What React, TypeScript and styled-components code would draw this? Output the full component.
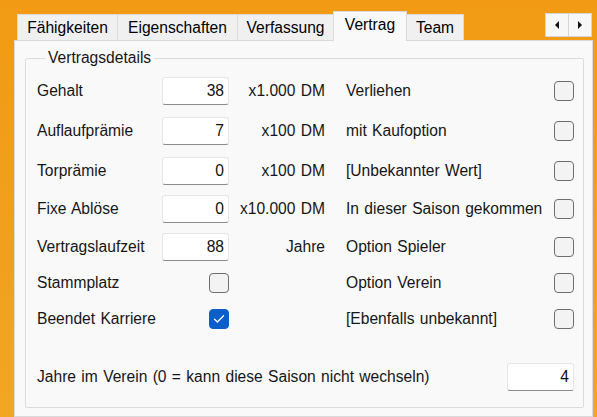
import React from 'react';
import styled, {createGlobalStyle} from "styled-components";

const GlobalStyle = createGlobalStyle`
    html, body {
        margin:0;
        padding:0;
        background:#f09c17;
    }
    body {
        font-family: "Liberation Sans", Arial, sans-serif;
        font-size:15.6px;
        word-spacing:1px;
        color:#161616;
    }
`;

const Window = styled.div`
    width:597px;
    height:417px;
    overflow:hidden;
    box-sizing:border-box;
    padding:11px 4px 0 14px;
    background: linear-gradient(180deg, #f29a13 0%, #f0a01e 60%, #f3a524 100%);
    display:flex;
    flex-direction:column;
`;

const TabStrip = styled.div`
    display:flex;
    align-items:flex-end;
    height:29px;
    padding-left:3px;
`;

const Tab = styled.div<{ $width: number; $active?: boolean }>`
    box-sizing:border-box;
    width:${({$width}) => $width}px;
    height:${({$active}) => $active ? 30 : 26}px;
    margin-bottom:${({$active}) => $active ? -1 : 0}px;
    margin-left:-1px;
    position:relative;
    z-index:${({$active}) => $active ? 1 : 0};
    display:flex;
    align-items:center;
    justify-content:center;
    padding-bottom:${({$active}) => $active ? 3 : 0}px;
    border:1px solid #dadada;
    border-bottom:none;
    background:${({$active}) => $active ? '#f9f9f9' : '#f0f0f0'};
    color:#000;
    white-space:nowrap;
    &:first-child { margin-left:0; }
`;

const ScrollButtons = styled.div`
    display:flex;
    margin-left:auto;
    margin-right:1px;
    align-self:flex-start;
    margin-top:2px;
`;

const ScrollButton = styled.div`
    box-sizing:border-box;
    width:24px;
    height:24px;
    border:1px solid #d6d6d6;
    background:#f7f7f7;
    display:flex;
    align-items:center;
    justify-content:center;
    & + & { margin-left:-1px; }
`;

const Panel = styled.div`
    flex:1;
    box-sizing:border-box;
    border:1px solid #dadada;
    background:#f9f9f9;
    padding:8px 8px 0 10px;
`;

const GroupBox = styled.fieldset`
    margin:0;
    box-sizing:border-box;
    width:559px;
    border:1px solid #dcdcdc;
    border-radius:2px;
    padding:4px 9px 13px 11px;
`;

const Legend = styled.legend`
    padding:0 3px;
    margin-left:8px;
    line-height:18px;
    color:#161616;
`;

const FormGrid = styled.div`
    display:grid;
    grid-template-columns:125px 67px 96px 21px 208px 20px;
    grid-template-rows:40px 40px 39px 38px 37px 36px 35px;
    align-items:center;
`;

const Label = styled.div`
    white-space:nowrap;
`;

const Unit = styled.div`
    text-align:right;
    white-space:nowrap;
`;

const TextBox = styled.div<{ $width?: number }>`
    box-sizing:border-box;
    width:${({$width}) => $width ?? 67}px;
    height:28px;
    background:#fff;
    border:1px solid #e6e6e6;
    border-bottom:1px solid #8d8d8d;
    border-radius:3px;
    display:flex;
    align-items:center;
    justify-content:flex-end;
    padding-right:4px;
    color:#111;
`;

const CheckBox = styled.div<{ $checked?: boolean }>`
    box-sizing:border-box;
    width:20px;
    height:20px;
    border-radius:4px;
    border:1px solid ${({$checked}) => $checked ? '#0c5fcb' : '#6e6e6e'};
    background:${({$checked}) => $checked ? '#0c5fcb' : '#f3f3f3'};
    display:flex;
    align-items:center;
    justify-content:center;
    justify-self:end;
`;

const FooterRow = styled.div`
    display:flex;
    align-items:center;
    justify-content:space-between;
    height:35px;
    margin-top:23px;
`;

type Field = {
    label: string;
    value?: string;
    unit?: string;
    checked?: boolean;
    right: string;
};

const fields: Field[] = [
    {label: "Gehalt", value: "38", unit: "x1.000 DM", right: "Verliehen"},
    {label: "Auflaufprämie", value: "7", unit: "x100 DM", right: "mit Kaufoption"},
    {label: "Torprämie", value: "0", unit: "x100 DM", right: "[Unbekannter Wert]"},
    {label: "Fixe Ablöse", value: "0", unit: "x10.000 DM", right: "In dieser Saison gekommen"},
    {label: "Vertragslaufzeit", value: "88", unit: "Jahre", right: "Option Spieler"},
    {label: "Stammplatz", checked: false, right: "Option Verein"},
    {label: "Beendet Karriere", checked: true, right: "[Ebenfalls unbekannt]"},
];

const tabs = [
    {text: "Fähigkeiten", width: 101},
    {text: "Eigenschaften", width: 121},
    {text: "Verfassung", width: 97},
    {text: "Vertrag", width: 74, active: true},
    {text: "Team", width: 58},
];

const Check = () => (
    <svg width="12" height="10" viewBox="0 0 12 10">
        <path d="M1.5 5.2 L4.4 8 L10.5 1.8" fill="none" stroke="#fff" strokeWidth="1.3"
              strokeLinecap="round" strokeLinejoin="round"/>
    </svg>
);

const Arrow = ({dir}: { dir: "left" | "right" }) => (
    <svg width="6" height="8" viewBox="0 0 6 8">
        <path d={dir === "left" ? "M5 0 L5 8 L1 4 Z" : "M1 0 L1 8 L5 4 Z"} fill="#111"/>
    </svg>
);

const App = () => {
    return (
        <>
            <GlobalStyle/>
            <Window>
                <TabStrip>
                    {tabs.map(t => (
                        <Tab key={t.text} $width={t.width} $active={t.active}>{t.text}</Tab>
                    ))}
                    <ScrollButtons>
                        <ScrollButton><Arrow dir="left"/></ScrollButton>
                        <ScrollButton><Arrow dir="right"/></ScrollButton>
                    </ScrollButtons>
                </TabStrip>
                <Panel>
                    <GroupBox>
                        <Legend>Vertragsdetails</Legend>
                        <FormGrid>
                            {fields.map(f => (
                                <React.Fragment key={f.label}>
                                    <Label>{f.label}</Label>
                                    {f.value !== undefined
                                        ? <TextBox>{f.value}</TextBox>
                                        : <CheckBox $checked={f.checked}>{f.checked && <Check/>}</CheckBox>}
                                    <Unit>{f.unit}</Unit>
                                    <span/>
                                    <Label>{f.right}</Label>
                                    <CheckBox/>
                                </React.Fragment>
                            ))}
                        </FormGrid>
                        <FooterRow>
                            <Label>Jahre im Verein (0 = kann diese Saison nicht wechseln)</Label>
                            <TextBox>4</TextBox>
                        </FooterRow>
                    </GroupBox>
                </Panel>
            </Window>
        </>
    );
};

export default App;
